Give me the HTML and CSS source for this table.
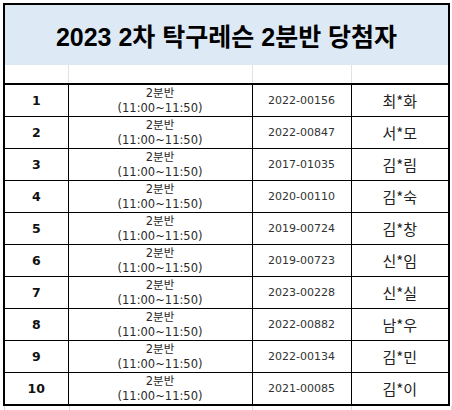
FILE: index.html
```html
<!DOCTYPE html>
<html lang="ko">
<head>
<meta charset="utf-8">
<title>2023 2차 탁구레슨 2분반 당첨자</title>
<link rel="stylesheet" href="styles.css">
</head>
<body>
<div class="sheet">
  <table class="roster">
    <colgroup>
      <col class="c-no">
      <col class="c-class">
      <col class="c-id">
      <col class="c-name">
    </colgroup>
    <tr class="title-row"><td colspan="4">2023 2차 탁구레슨 2분반 당첨자</td></tr>
    <tr class="spacer-row"><td></td><td></td><td></td><td></td></tr>
    <tr class="data"><td class="no">1</td><td class="cls">2분반<br>(11:00~11:50)</td><td class="id">2022-00156</td><td class="name">최*화</td></tr>
    <tr class="data"><td class="no">2</td><td class="cls">2분반<br>(11:00~11:50)</td><td class="id">2022-00847</td><td class="name">서*모</td></tr>
    <tr class="data"><td class="no">3</td><td class="cls">2분반<br>(11:00~11:50)</td><td class="id">2017-01035</td><td class="name">김*림</td></tr>
    <tr class="data"><td class="no">4</td><td class="cls">2분반<br>(11:00~11:50)</td><td class="id">2020-00110</td><td class="name">김*숙</td></tr>
    <tr class="data"><td class="no">5</td><td class="cls">2분반<br>(11:00~11:50)</td><td class="id">2019-00724</td><td class="name">김*창</td></tr>
    <tr class="data"><td class="no">6</td><td class="cls">2분반<br>(11:00~11:50)</td><td class="id">2019-00723</td><td class="name">신*임</td></tr>
    <tr class="data"><td class="no">7</td><td class="cls">2분반<br>(11:00~11:50)</td><td class="id">2023-00228</td><td class="name">신*실</td></tr>
    <tr class="data"><td class="no">8</td><td class="cls">2분반<br>(11:00~11:50)</td><td class="id">2022-00882</td><td class="name">남*우</td></tr>
    <tr class="data"><td class="no">9</td><td class="cls">2분반<br>(11:00~11:50)</td><td class="id">2022-00134</td><td class="name">김*민</td></tr>
    <tr class="data"><td class="no">10</td><td class="cls">2분반<br>(11:00~11:50)</td><td class="id">2021-00085</td><td class="name">김*이</td></tr>
  </table>
  <div class="grid-tail">
    <span class="g g-a"></span><span class="g g-b"></span><span class="g g-c"></span><span class="g g-d"></span>
  </div>
</div>
</body>
</html>
```
FILE: styles.css
```css
html, body {
  margin: 0;
  padding: 0;
  background: #ffffff;
}

.sheet {
  padding: 3px 0 0 3px;
  font-family: "DejaVu Sans", "Noto Sans CJK KR", sans-serif;
  color: #222;
}

.roster {
  border-collapse: collapse;
  table-layout: fixed;
  width: 447px;
  border: 2px solid #000;
}

.c-no { width: 64px; }
.c-class { width: 184px; }
.c-id { width: 99px; }
.c-name { width: 98px; }

.roster td {
  padding: 0;
  text-align: center;
  vertical-align: middle;
}

.title-row td {
  height: 60px;
  background: #dde9f5;
  font-family: "Liberation Sans", "Noto Sans CJK KR", sans-serif;
  font-weight: bold;
  font-size: 25px;
  color: #000;
  border-bottom: 0;
}

.spacer-row td {
  height: 18px;
  border-left: 1px solid #dbe7db;
  border-right: 1px solid #dbe7db;
  border-bottom: 2px solid #000;
}

.spacer-row td:first-child { border-left: 2px solid #000; }
.spacer-row td:last-child { border-right: 2px solid #000; }

.data td {
  height: 31px;
  border: 1px solid #000;
}

.data td.no {
  font-weight: bold;
  font-size: 12.5px;
  color: #111;
}

.data td.cls {
  font-size: 11.5px;
  line-height: 15px;
  color: #2a2a2a;
}

.data td.id {
  font-size: 11px;
  color: #333;
}

.data td.name {
  font-family: "Noto Sans CJK KR", sans-serif;
  font-size: 15px;
  color: #222;
}

.grid-tail {
  display: flex;
  height: 6px;
}

.g {
  display: block;
  height: 6px;
  border-left: 1px solid #d9d9d9;
}

.g-a { width: 64px; margin-left: 1px; }
.g-b { width: 183px; }
.g-c { width: 98px; }
.g-d { width: 99px; border-right: 1px solid #d9d9d9; }
```
